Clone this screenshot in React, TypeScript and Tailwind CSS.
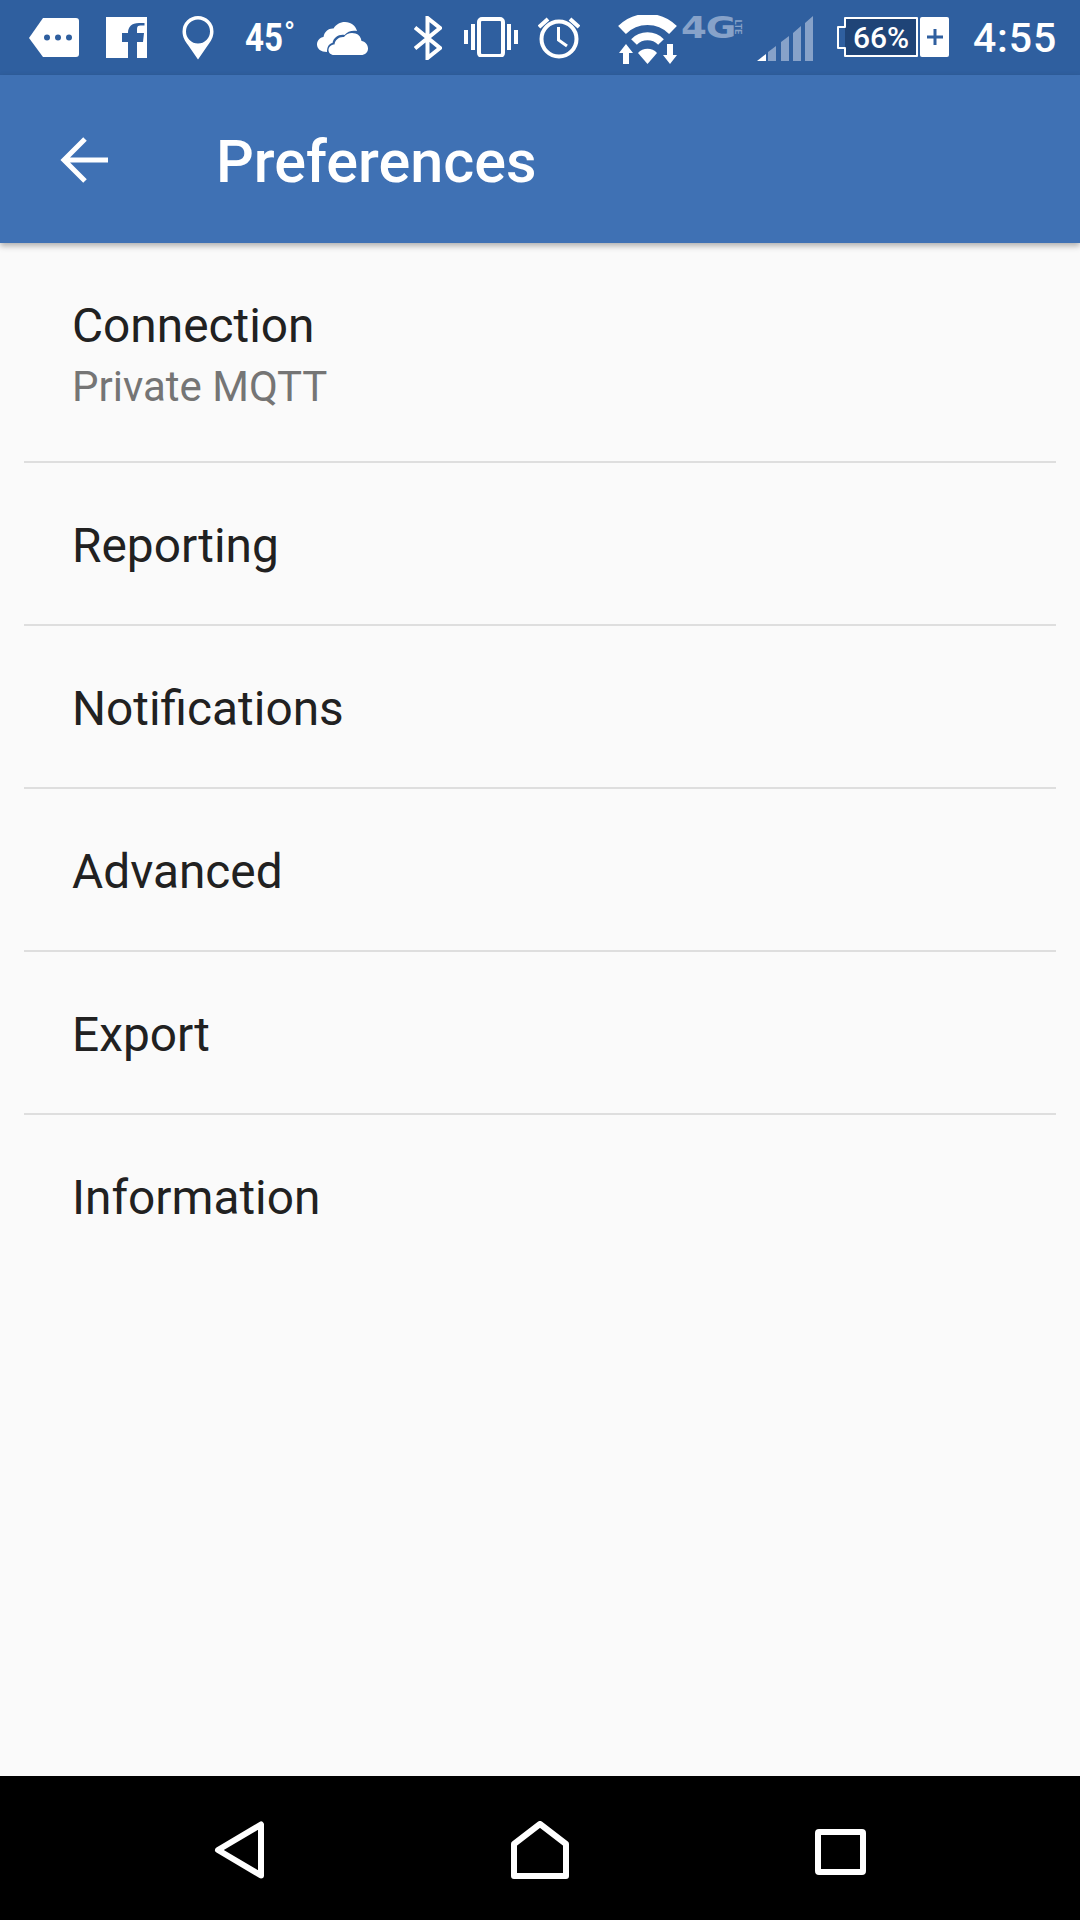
import { ReactNode } from "react";

const prefs = ["Reporting", "Notifications", "Advanced", "Export", "Information"];

function Icon({ w, h, className, children }: { w: number; h: number; className?: string; children: ReactNode }) {
  return (
    <svg width={w} height={h} viewBox={`0 0 ${w} ${h}`} className={`block shrink-0 ${className ?? ""}`}>
      {children}
    </svg>
  );
}

function StatusBar() {
  return (
    <div className="flex h-[75px] items-start bg-[#2f5f9f] pl-[29px] text-white">
      <Icon w={51} h={40} className="mt-[18px]">
        <path d="M14 0H47a3 3 0 0 1 3 3V36a3 3 0 0 1-3 3H14L0 20Z" fill="#fff" />
        <circle cx="18" cy="19.5" r="3" fill="#2f5f9f" />
        <circle cx="29" cy="19.5" r="3" fill="#2f5f9f" />
        <circle cx="40" cy="19.5" r="3" fill="#2f5f9f" />
      </Icon>
      <Icon w={41} h={41} className="mt-[17px] ml-[26px]">
        <path
          fillRule="evenodd"
          d="M0 0H41V41H31V25H37L38 16H31V12C31 9.5 32 8.500 34.500 8.500H38.500V6H33C25.500 6 22 10 22 16H16V25H22V41H0Z"
          fill="#fff"
        />
      </Icon>
      <Icon w={32} h={44} className="mt-[16px] ml-[35px]">
        <path
          fillRule="evenodd"
          d="M16 0A15.500 15.500 0 0 1 31.500 15.500C31.500 21 29 25 26 29L16 43.500L6 29C3 25 0.500 21 0.500 15.500A15.500 15.500 0 0 1 16 0ZM16 3.500A12 12 0 1 0 16 27.500A12 12 0 1 0 16 3.500Z"
          fill="#fff"
        />
      </Icon>
      <div className="mt-[15px] ml-[31px] flex w-[52px] items-start font-['Roboto',sans-serif] font-bold">
        <span className="inline-block w-[39px] origin-left scale-x-[0.85] text-[39px] leading-[46px]">45</span>
        <span className="mt-[3px] text-[29px] leading-[30px] font-medium">°</span>
      </div>
      <Icon w={51} h={33} className="mt-[22px] ml-[20px]">
        <path
          d="M10 30C4 30 0 27 0 22.500C0 18.500 3 15.500 6.500 15C7.500 9 12 6 16.500 6.500C19 2.500 23 0 28 0C34 0 38.500 3.500 40 9C35 8 30.500 9.500 27.500 13C22 12 16.500 15.500 15.500 21C12 21.500 10 25 10 30Z"
          fill="#fff"
        />
        <path
          d="M17 33C13.500 33 11.500 30.500 11.500 28C11.500 25 14 22.500 17.500 22.500C18 18 22 14.500 27 15C29.500 11.500 34 10 38.500 11.500C42 12.500 44 15.500 44.500 19C48 19.500 51 22.500 51 26.500C51 30.500 48 33 44 33Z"
          fill="#fff"
        />
      </Icon>
      <Icon w={28} h={44} className="mt-[16px] ml-[46px]">
        <path d="M1 11.500L26 32L13.500 42V2L26 12L1 32.500" fill="none" stroke="#fff" strokeWidth="4" />
      </Icon>
      <Icon w={54} h={40} className="mt-[17px] ml-[22px]">
        <rect x="15" y="2" width="24" height="37" rx="3" fill="none" stroke="#fff" strokeWidth="4" />
        <rect x="0" y="13" width="4" height="14" fill="#fff" />
        <rect x="7" y="7" width="4" height="26" fill="#fff" />
        <rect x="43" y="7" width="4" height="26" fill="#fff" />
        <rect x="50" y="13" width="4" height="14" fill="#fff" />
      </Icon>
      <Icon w={42} h={44} className="mt-[15px] ml-[20px]">
        <circle cx="21" cy="24" r="17.500" fill="none" stroke="#fff" strokeWidth="4" />
        <path d="M20.500 12V25L29 31" fill="none" stroke="#fff" strokeWidth="3" />
        <path d="M1 12L10 4M41 12L32 4" fill="none" stroke="#fff" strokeWidth="4" />
      </Icon>
      <Icon w={60} h={50} className="mt-[15px] ml-[38px]">
        <path d="M4 15A36 36 0 0 1 55 15" fill="none" stroke="#fff" strokeWidth="11" />
        <path d="M16 27A19 19 0 0 1 43 27" fill="none" stroke="#fff" strokeWidth="8" />
        <path d="M29.500 49L20 38A13 13 0 0 1 39 38Z" fill="#fff" />
        <path d="M8 29L15 38H11V49H5V38H1Z" fill="#fff" />
        <path d="M49 29H55V40H59L52 49L45 40H49Z" fill="#fff" />
      </Icon>
      <div className="mt-[15px] ml-[3px] flex w-[65px] items-start text-[#87a2c9]">
        <span className="w-[46px] origin-left scale-x-[1.2] font-['DejaVu_Sans',sans-serif] text-[31px] leading-[24px] font-bold tracking-[-1px]">
          4G
        </span>
        <span className="mt-[7px] ml-[3px] w-[16px] shrink-0 rotate-90 text-center font-['Roboto',sans-serif] text-[9px] leading-[10px] font-bold">
          LTE
        </span>
      </div>
      <Icon w={58} h={46} className="mt-[16px] ml-[11px]">
        <path d="M0 45L9 38V45Z" fill="#fff" />
        <path d="M11 36L19 30V45H11ZM24 26L32 20V45H24ZM36 17L44 10V45H36ZM48 7L56 0V45H48Z" fill="#87a2c9" />
      </Icon>
      <Icon w={81} h={40} className="mt-[17px] ml-[22px]">
        <path d="M8 1H80V39H8Z" fill="#1f4477" />
        <path d="M8 10V1H80V39H8V31H1V10Z" fill="none" stroke="#fff" strokeWidth="2" strokeLinejoin="round" />
        <path d="M2 11H8V30H2Z" fill="#2f5f9f" />
        <text x="44" y="31" textAnchor="middle" fill="#fff" className="font-['Roboto',sans-serif] text-[30px] font-medium">
          66%
        </text>
      </Icon>
      <div className="mt-[17px] ml-[2px] flex h-[40px] w-[29px] items-center justify-center rounded-[2px] bg-white">
        <Icon w={16} h={16}>
          <path d="M0 6.500H16V9.500H0ZM6.500 0H9.500V16H6.500Z" fill="#2f5f9f" />
        </Icon>
      </div>
      <div className="mt-[15px] ml-[24px] font-['Roboto',sans-serif] text-[41px] leading-[47px] font-medium tracking-[0.02em]">
        4:55
      </div>
    </div>
  );
}

function Row({ title, sub }: { title: string; sub?: string }) {
  return (
    <div className={`flex flex-col justify-center px-[48px] ${sub ? "h-[218px] pt-[5px]" : "h-[161px] pt-[5px]"}`}>
      <div className="text-[47.8px] leading-[64px] text-[#212121]">{title}</div>
      {sub && <div className="text-[42px] leading-[58px] text-[#757575]">{sub}</div>}
    </div>
  );
}

export default function App() {
  return (
    <div className="flex h-[1920px] w-[1080px] flex-col overflow-hidden bg-[#fafafa] font-['Roboto',sans-serif]">
      <StatusBar />
      <div className="relative z-10 flex h-[168px] items-center bg-[#3f71b4] pl-[60px] shadow-[0_3px_6px_rgba(0,0,0,0.3)]">
        <Icon w={48} h={46} className="mt-[2px]">
          <path d="M48 23H4M25 2L4 23L25 44" fill="none" stroke="#fff" strokeWidth="5" />
        </Icon>
        <h1 className="mt-[5px] ml-[108px] text-[59.3px] leading-none font-medium text-white">Preferences</h1>
      </div>

      <div className="flex-1 px-[24px]">
        <Row title="Connection" sub="Private MQTT" />
        {prefs.map((p) => (
          <div key={p} className="border-t-2 border-[#dedede]">
            <Row title={p} />
          </div>
        ))}
      </div>

      <div className="flex h-[144px] items-center bg-black pl-[213px]">
        <Icon w={52} h={58} className="mt-[4px]">
          <path d="M48 3.500V54.500L5 29Z" fill="none" stroke="#fff" strokeWidth="6" strokeLinejoin="round" />
        </Icon>
        <Icon w={58} h={58} className="mt-[4px] ml-[246px]">
          <path d="M3 23L29 3L55 23V55H3Z" fill="none" stroke="#fff" strokeWidth="6" strokeLinejoin="round" />
        </Icon>
        <Icon w={51} h={46} className="mt-[8px] ml-[246px]">
          <rect x="3" y="3" width="45" height="40" rx="1" fill="none" stroke="#fff" strokeWidth="6" />
        </Icon>
      </div>
    </div>
  );
}
